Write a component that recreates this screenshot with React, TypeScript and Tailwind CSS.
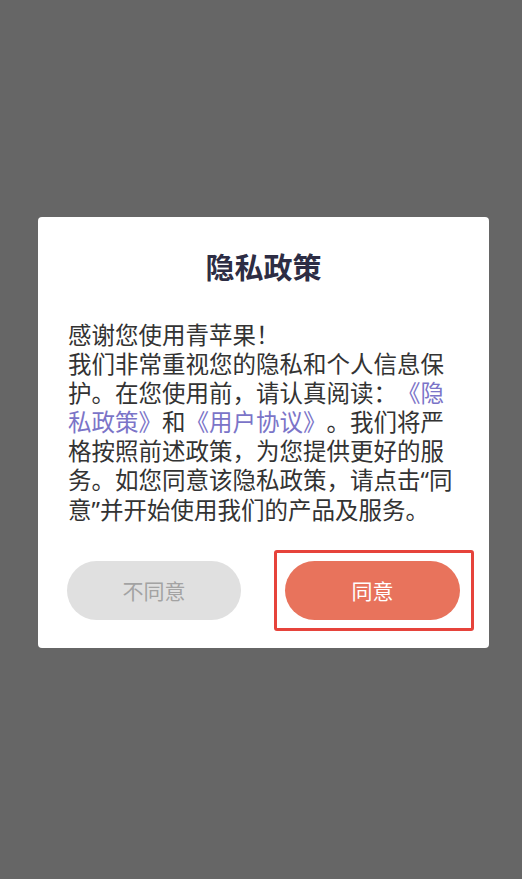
type Seg = { text: string; link?: boolean; latin?: boolean };

const lines: Seg[][] = [
  [{ text: '感谢您使用青苹果！' }],
  [{ text: '我们非常重视您的隐私和个人信息保' }],
  [{ text: '护。在您使用前，请认真阅读：' }, { text: '《隐', link: true }],
  [{ text: '私政策》', link: true }, { text: '和' }, { text: '《用户协议》', link: true }, { text: '。我们将严' }],
  [{ text: '格按照前述政策，为您提供更好的服' }],
  [{ text: '务。如您同意该隐私政策，请点击' }, { text: '“', latin: true }, { text: '同' }],
  [{ text: '意' }, { text: '”', latin: true }, { text: '并开始使用我们的产品及服务。' }],
];

export default function App() {
  return (
    <div
      className="h-[879px] w-[522px] bg-[#666666] pt-[217px] [text-spacing-trim:space-all]"
      style={{ fontFamily: '"Noto Sans CJK SC", sans-serif' }}
    >
      <div className="ml-[38px] w-[451px] rounded-[4px] bg-white px-[30px] pt-[31px] pb-[28px]">
        <h1 className="text-center text-[29px] leading-[36px] font-bold text-[#2d2d44]">隐私政策</h1>

        <div className="mt-[36px] text-[23.5px] leading-[29px] text-[#333333]">
          {lines.map((line, i) => (
            <div key={i} className="whitespace-nowrap">
              {line.map((seg, j) => (
                <span
                  key={j}
                  className={seg.link ? 'text-[#7b74c8]' : seg.latin ? 'font-["Noto_Sans"]' : ''}
                >
                  {seg.text}
                </span>
              ))}
            </div>
          ))}
        </div>

        <div className="mt-[36px] flex items-center justify-between">
          <button className="ml-[-1px] h-[59px] w-[174px] rounded-full bg-[#e0e0e0] text-[21px] text-[#a3a3a3]">
            不同意
          </button>
          <div className="relative mr-[-1px]">
            <button className="h-[59px] w-[175px] rounded-full bg-[#e8735c] text-[21px] text-white">
              同意
            </button>
            <div className="pointer-events-none absolute top-[-11px] right-[-14px] bottom-[-11px] left-[-11px] rounded-[3px] border-[3px] border-[#e6433b]" />
          </div>
        </div>
      </div>
    </div>
  );
}
